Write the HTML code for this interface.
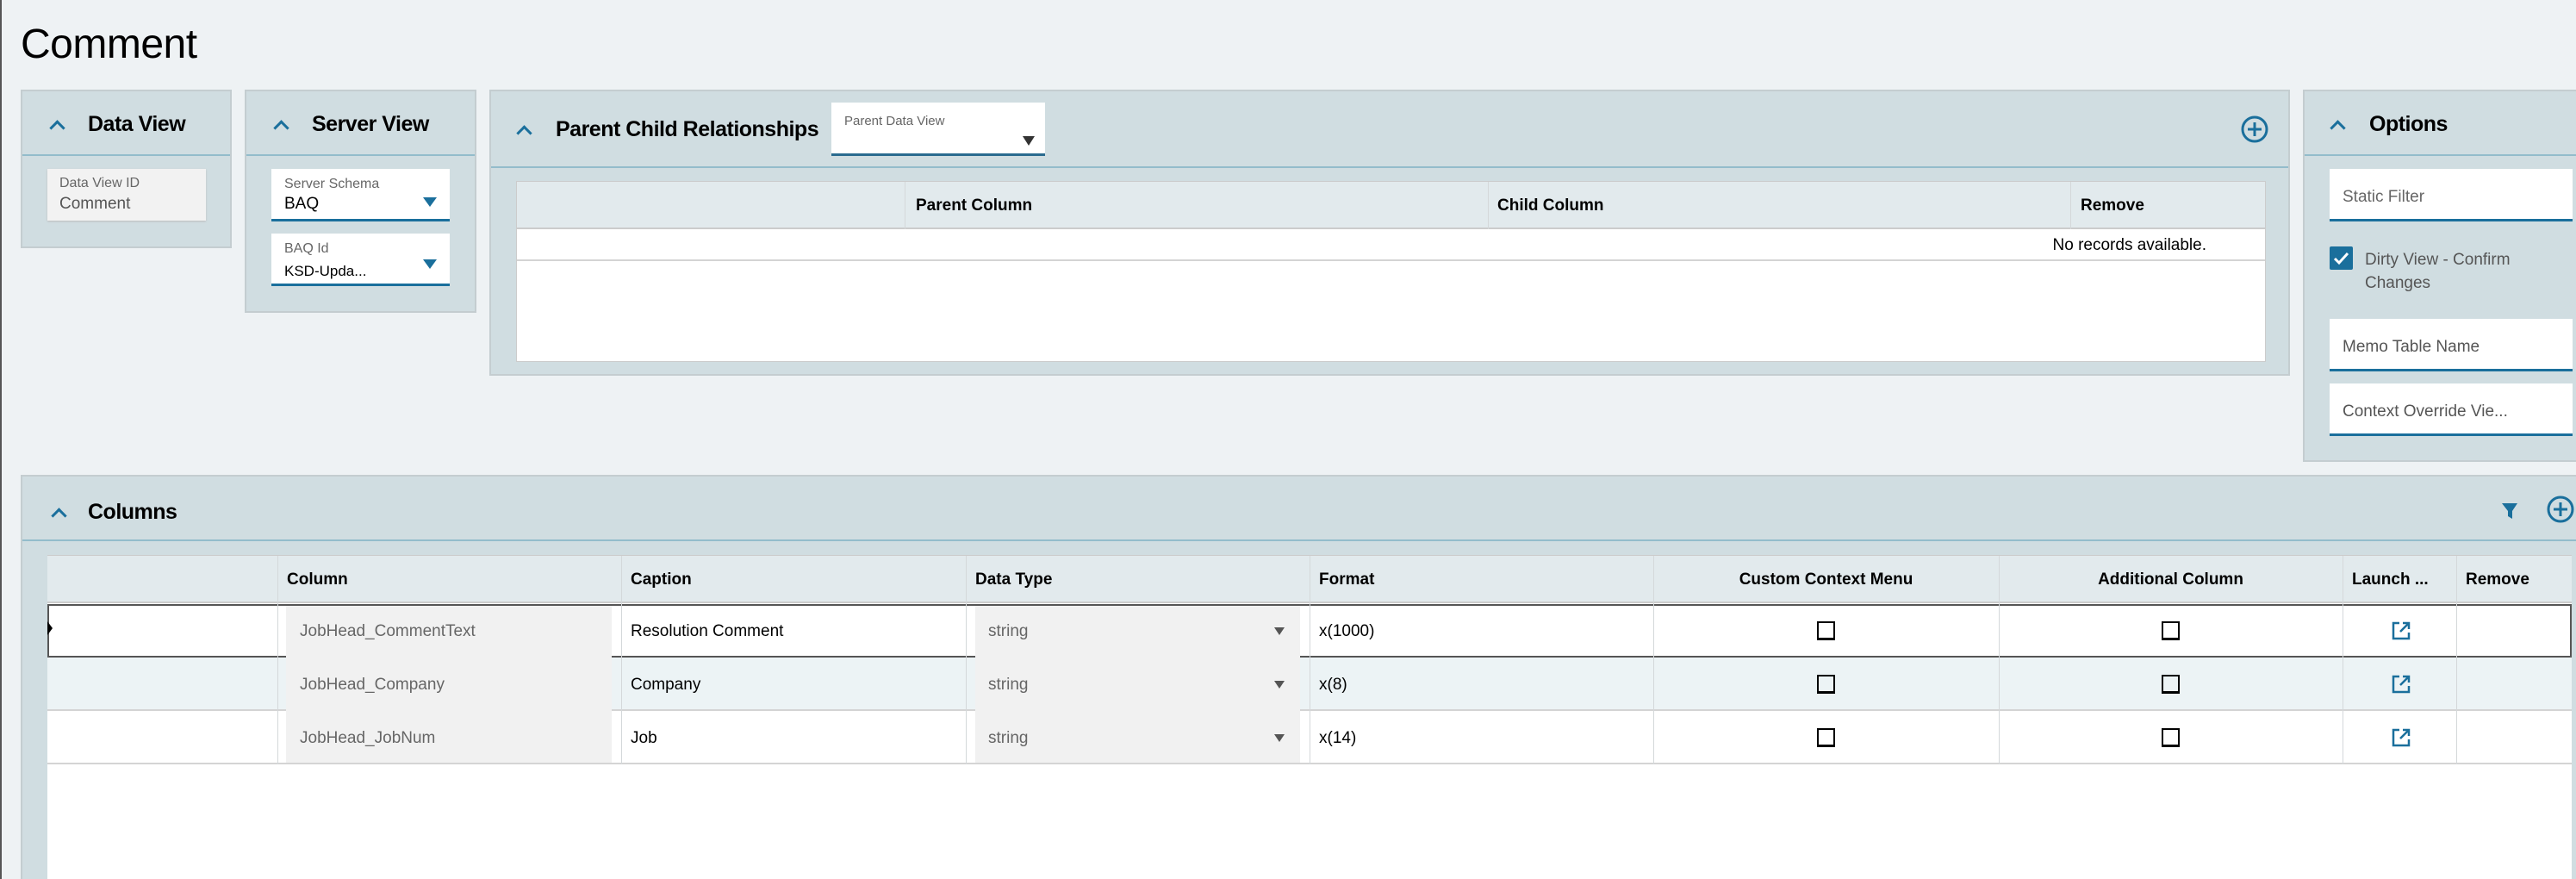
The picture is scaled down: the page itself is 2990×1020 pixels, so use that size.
<!DOCTYPE html>
<html style="width:2990px;height:1020px;overflow:hidden"><head><meta charset="utf-8"><style>
*{box-sizing:border-box;margin:0;padding:0}
body{width:2990px;height:1020px;overflow:hidden;background:#eef2f4;font-family:"Liberation Sans",sans-serif;position:relative;color:#000}
.a{position:absolute}
.panel{position:absolute;background:#d0dde1;border:2px solid #c4cdd0}
.hdiv{position:absolute;left:0;right:0;height:2px;background:#93bccb}
.chev{position:absolute;width:13px;height:13px;border-left:3px solid #1a6f9c;border-top:3px solid #1a6f9c;transform:rotate(45deg)}
.ttl{position:absolute;font-size:25px;font-weight:bold;letter-spacing:-0.5px}
.field{position:absolute;background:#fff;border-bottom:3px solid #1a6f9c}
.lbl{position:absolute;font-size:16px;color:#666}
.val{position:absolute;font-size:19px;color:#000}
.tri{position:absolute;width:0;height:0;border-left:8px solid transparent;border-right:8px solid transparent;border-top:11px solid #1a6f9c}
.th{position:absolute;font-size:19px;font-weight:bold;top:0;line-height:55px}
.cell{position:absolute;font-size:19px}
.cb{position:absolute;width:21px;height:22px;border:2px solid #000;border-bottom-width:3px}
.vl{position:absolute;width:1px;background:#d4d8da}
</style></head><body>
<div class="a" style="left:0;top:0;width:2px;height:1020px;background:#555"></div>
<div class="a" style="left:24px;top:24px;font-size:48px;letter-spacing:-0.5px">Comment</div>

<!-- Data View -->
<div class="panel" style="left:24px;top:104px;width:245px;height:184px">
 <div class="chev" style="left:34px;top:36px"></div>
 <div class="ttl" style="left:76px;top:24px">Data View</div>
 <div class="hdiv" style="top:73px"></div>
 <div class="a" style="left:29px;top:90px;width:184px;height:60px;background:#f2f2f2;box-shadow:0 1px 2px #bbb">
  <div class="lbl" style="left:14px;top:8px">Data View ID</div>
  <div class="val" style="left:14px;top:30px;color:#555">Comment</div>
 </div>
</div>

<!-- Server View -->
<div class="panel" style="left:284px;top:104px;width:269px;height:259px">
 <div class="chev" style="left:34px;top:36px"></div>
 <div class="ttl" style="left:76px;top:24px">Server View</div>
 <div class="hdiv" style="top:73px"></div>
 <div class="field" style="left:29px;top:90px;width:207px;height:61px">
  <div class="lbl" style="left:15px;top:9px">Server Schema</div>
  <div class="val" style="left:15px;top:30px">BAQ</div>
  <div class="tri" style="left:176px;top:33px"></div>
 </div>
 <div class="field" style="left:29px;top:165px;width:207px;height:61px">
  <div class="lbl" style="left:15px;top:9px">BAQ Id</div>
  <div class="val" style="left:15px;top:34px;font-size:17px">KSD-Upda...</div>
  <div class="tri" style="left:176px;top:30px"></div>
 </div>
</div>

<!-- Parent Child -->
<div class="panel" style="left:568px;top:104px;width:2090px;height:332px">
 <div class="chev" style="left:32px;top:42px"></div>
 <div class="ttl" style="left:75px;top:30px">Parent Child Relationships</div>
 <div class="field" style="left:395px;top:13px;width:248px;height:62px;border-bottom-color:#2a6b8f">
  <div class="lbl" style="left:15px;top:13px;font-size:15px">Parent Data View</div>
  <div class="tri" style="left:222px;top:39px;border-top-color:#333;border-left-width:7px;border-right-width:7px"></div>
 </div>
 <svg class="a" style="left:2030px;top:27px" width="34" height="34" viewBox="0 0 34 34"><circle cx="17" cy="17" r="14" fill="none" stroke="#1a6f9c" stroke-width="3"/><path d="M17 9v16M9 17h16" stroke="#1a6f9c" stroke-width="3"/></svg>
 <div class="hdiv" style="top:87px"></div>
 <div class="a" style="left:29px;top:104px;width:2031px;height:210px;background:#fff;border:1px solid #ccc">
  <div class="a" style="left:0;top:0;right:0;height:55px;background:#e2eaed;border-bottom:2px solid #ccc"></div>
  <div class="vl" style="left:450px;top:0;height:55px"></div>
  <div class="vl" style="left:1127px;top:0;height:55px"></div>
  <div class="vl" style="left:1803px;top:0;height:55px"></div>
  <div class="th" style="left:463px">Parent Column</div>
  <div class="th" style="left:1138px">Child Column</div>
  <div class="th" style="left:1815px">Remove</div>
  <div class="a" style="left:0;right:0;top:57px;height:35px;border-bottom:2px solid #d4d4d4"></div>
  <div class="cell" style="right:68px;top:63px">No records available.</div>
 </div>
</div>

<!-- Options -->
<div class="panel" style="left:2673px;top:104px;width:330px;height:432px">
 <div class="chev" style="left:32px;top:36px"></div>
 <div class="ttl" style="left:75px;top:24px">Options</div>
 <div class="hdiv" style="top:73px"></div>
 <div class="field" style="left:29px;top:90px;width:282px;height:61px"><div class="val" style="left:15px;top:22px;color:#666">Static Filter</div></div>
 <div class="a" style="left:29px;top:180px;width:27px;height:27px;background:#1a6f9c;border-radius:2px"></div>
 <svg class="a" style="left:29px;top:180px" width="27" height="27"><path d="M6 14l5 5 10-11" fill="none" stroke="#fff" stroke-width="3"/></svg>
 <div class="val" style="left:70px;top:182px;color:#555;line-height:27px">Dirty View - Confirm<br>Changes</div>
 <div class="field" style="left:29px;top:264px;width:282px;height:61px"><div class="val" style="left:15px;top:22px;color:#555">Memo Table Name</div></div>
 <div class="field" style="left:29px;top:339px;width:282px;height:61px"><div class="val" style="left:15px;top:22px;color:#555">Context Override Vie...</div></div>
</div>

<!-- Columns -->
<div class="panel" style="left:24px;top:551px;width:2980px;height:469px;border-bottom:none">
 <div class="chev" style="left:36px;top:39px"></div>
 <div class="ttl" style="left:76px;top:27px">Columns</div>
 <svg class="a" style="left:2876px;top:28px" width="22" height="24" viewBox="0 0 22 24"><path d="M2 3h18l-6 9v9l-5-3v-6z" fill="#1a6f9c"/></svg>
 <svg class="a" style="left:2929px;top:21px" width="34" height="34" viewBox="0 0 34 34"><circle cx="17" cy="17" r="14" fill="none" stroke="#1a6f9c" stroke-width="3"/><path d="M17 9v16M9 17h16" stroke="#1a6f9c" stroke-width="3"/></svg>
 <div class="hdiv" style="top:73px"></div>
 <div class="a" style="left:29px;top:91px;width:2930px;height:380px;background:#fff;border-top:1px solid #ccc">
  <div class="a" style="left:0;top:0;right:0;height:55px;background:#e2eaed;border-bottom:2px solid #ccc"></div>
  <div class="a" style="left:0;right:0;top:56px;height:62px;border:2px solid #555;background:#fff"></div>
  <div class="a" style="left:0;right:0;top:118px;height:62px;background:#ecf3f5;border-bottom:2px solid #d4d4d4"></div>
  <div class="a" style="left:0;right:0;top:180px;height:62px;border-bottom:2px solid #d4d4d4"></div>
  <div class="a" style="left:0;top:76px;width:0;height:0;border-top:8px solid transparent;border-bottom:8px solid transparent;border-left:6px solid #000"></div>
  <div class="vl" style="left:267px;top:0;height:242px"></div>
  <div class="vl" style="left:666px;top:0;height:242px"></div>
  <div class="vl" style="left:1066px;top:0;height:242px"></div>
  <div class="vl" style="left:1465px;top:0;height:242px"></div>
  <div class="vl" style="left:1864px;top:0;height:242px"></div>
  <div class="vl" style="left:2265px;top:0;height:242px"></div>
  <div class="vl" style="left:2664px;top:0;height:242px"></div>
  <div class="vl" style="left:2796px;top:0;height:242px"></div>
  <div class="th" style="left:278px">Column</div>
  <div class="th" style="left:677px">Caption</div>
  <div class="th" style="left:1077px">Data Type</div>
  <div class="th" style="left:1476px">Format</div>
  <div class="th" style="left:1864px;width:401px;text-align:center">Custom Context Menu</div>
  <div class="th" style="left:2265px;width:399px;text-align:center">Additional Column</div>
  <div class="th" style="left:2675px">Launch ...</div>
  <div class="th" style="left:2807px">Remove</div>
  <div class="a" style="left:277px;top:58px;width:378px;height:182px;background:#f1f1f1"></div>
  <div class="a" style="left:1077px;top:58px;width:377px;height:182px;background:#f1f1f1"></div>
  <div class="cell" style="left:293px;top:77px;color:#666">JobHead_CommentText</div>
  <div class="cell" style="left:293px;top:139px;color:#666">JobHead_Company</div>
  <div class="cell" style="left:293px;top:201px;color:#666">JobHead_JobNum</div>
  <div class="cell" style="left:677px;top:77px">Resolution Comment</div>
  <div class="cell" style="left:677px;top:139px">Company</div>
  <div class="cell" style="left:677px;top:201px">Job</div>
  <div class="cell" style="left:1092px;top:77px;color:#666">string</div>
  <div class="cell" style="left:1092px;top:139px;color:#666">string</div>
  <div class="cell" style="left:1092px;top:201px;color:#666">string</div>
  <div class="tri" style="left:1424px;top:83px;border-top-color:#555;border-left-width:6px;border-right-width:6px;border-top-width:9px"></div>
  <div class="tri" style="left:1424px;top:145px;border-top-color:#555;border-left-width:6px;border-right-width:6px;border-top-width:9px"></div>
  <div class="tri" style="left:1424px;top:207px;border-top-color:#555;border-left-width:6px;border-right-width:6px;border-top-width:9px"></div>
  <div class="cell" style="left:1476px;top:77px">x(1000)</div>
  <div class="cell" style="left:1476px;top:139px">x(8)</div>
  <div class="cell" style="left:1476px;top:201px">x(14)</div>
  <div class="cb" style="left:2054px;top:76px"></div>
  <div class="cb" style="left:2054px;top:138px"></div>
  <div class="cb" style="left:2054px;top:200px"></div>
  <div class="cb" style="left:2454px;top:76px"></div>
  <div class="cb" style="left:2454px;top:138px"></div>
  <div class="cb" style="left:2454px;top:200px"></div>
  <svg class="a" style="left:2720px;top:75px" width="24" height="24" viewBox="0 0 24 24"><path d="M10 3H3v18h18v-7M14 3h7v7M21 3L11 13" fill="none" stroke="#1a6f9c" stroke-width="2.5"/></svg>
  <svg class="a" style="left:2720px;top:137px" width="24" height="24" viewBox="0 0 24 24"><path d="M10 3H3v18h18v-7M14 3h7v7M21 3L11 13" fill="none" stroke="#1a6f9c" stroke-width="2.5"/></svg>
  <svg class="a" style="left:2720px;top:199px" width="24" height="24" viewBox="0 0 24 24"><path d="M10 3H3v18h18v-7M14 3h7v7M21 3L11 13" fill="none" stroke="#1a6f9c" stroke-width="2.5"/></svg>
 </div>
</div>
</body></html>
